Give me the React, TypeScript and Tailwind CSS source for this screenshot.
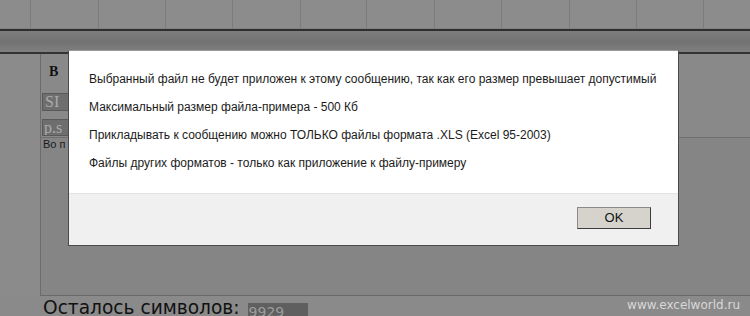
import React from "react";

const cols = [30, 98, 165, 232, 300, 366, 434, 501, 569, 636, 703];

export default function App() {
  return (
    <div className="relative w-[750px] h-[316px] overflow-hidden bg-[#878787]" style={{ fontFamily: '"Liberation Sans", Arial, sans-serif' }}>
      {/* top grid band */}
      <div className="relative h-[29px] bg-[#8c8c8c] border-b border-[#828282]">
        {cols.map((x) => (
          <div key={x} className="absolute top-0 bottom-0 w-px bg-[#7c7c7c]" style={{ left: x }} />
        ))}
      </div>
      <div className="h-[2px] bg-[#2e2e2e]" />
      {/* toolbar band */}
      <div className="h-[21px] bg-gradient-to-b from-[#7e7e7e] via-[#727272] to-[#7f7f7f]" />
      <div className="h-[2px] bg-[#333333]" />
      {/* main */}
      <div className="flex h-[242px]">
        <div className="w-[41px] bg-[#8b8b8b] border-r border-[#6c6c6c]" />
        <div className="flex-1 flex flex-col bg-[#858585]">
          <div className="h-[83px] bg-[#898989] pl-[1px] pt-[10px]">
            <div className="pl-[7px] text-[14px] font-bold leading-[16px] text-[#111]" style={{ fontFamily: '"Liberation Serif", serif' }}>B</div>
            <div className="mt-[13px] w-[40px] h-[18px] bg-[#6e6e6e] border border-[#5a5a5a] text-[#aaaaaa] text-[16px] leading-[16px] pl-[2px] overflow-hidden" style={{ fontFamily: '"Liberation Serif", serif' }}>SI</div>
            <div className="mt-[8px] w-[40px] h-[17px] bg-[#6e6e6e] border border-[#5a5a5a] text-[#aaaaaa] text-[16px] leading-[15px] pl-[1px] overflow-hidden" style={{ fontFamily: '"Liberation Serif", serif' }}>p.s</div>
          </div>
          <div className="h-px bg-[#6f6f6f]" />
          <div className="flex-1 pl-[2px] text-[11px] leading-[12px] text-[#1a1a1a]">Во п</div>
          <div className="h-px bg-[#6a6a6a]" />
        </div>
      </div>
      {/* bottom bar */}
      <div className="flex items-start h-[20px] bg-[#8a8a8a] pl-[43px] pt-[1px]">
        <span className="text-[18.6px] leading-[22px] text-[#111]" style={{ fontFamily: '"DejaVu Sans", Verdana, sans-serif' }}>Осталось символов:</span>
        <div className="ml-[8px] mt-[6px] w-[60px] h-[16px] bg-[#5f5f5f] text-[14px] leading-[18px] text-[#9c9c9c] pl-[1px]" style={{ fontFamily: '"DejaVu Sans", Verdana, sans-serif' }}>9929</div>
        <div className="ml-auto mr-[10px] mt-[1px] text-[12px] leading-[14px] text-[#d8d8d8]" style={{ fontFamily: '"DejaVu Sans", Verdana, sans-serif' }}>www.excelworld.ru</div>
      </div>

      {/* dialog */}
      <div className="absolute left-[68px] top-[50px] w-[611px] h-[196px] flex flex-col bg-white border border-[#4a4a4a] border-t-[#9a9a9a]">
        <div className="h-[142px] pl-[20px] pt-[20px] flex flex-col gap-[12px] text-[12px] leading-[16px] text-[#1b1b1b]">
          <div>Выбранный файл не будет приложен к этому сообщению, так как его размер превышает допустимый</div>
          <div>Максимальный размер файла-примера - 500 Кб</div>
          <div>Прикладывать к сообщению можно ТОЛЬКО файлы формата .XLS (Excel 95-2003)</div>
          <div>Файлы других форматов - только как приложение к файлу-примеру</div>
        </div>
        <div className="flex-1 bg-[#f0f0f0] border-t border-[#e2e2e2] flex justify-end items-start pt-[13px] pr-[27px]">
          <div className="w-[74px] h-[22px] bg-[#d6d3cd] border border-[#3c3c3c] border-t-[#8a8a8a] border-l-[#8a8a8a] flex items-center justify-center text-[13px] text-[#111]">OK</div>
        </div>
      </div>
    </div>
  );
}
